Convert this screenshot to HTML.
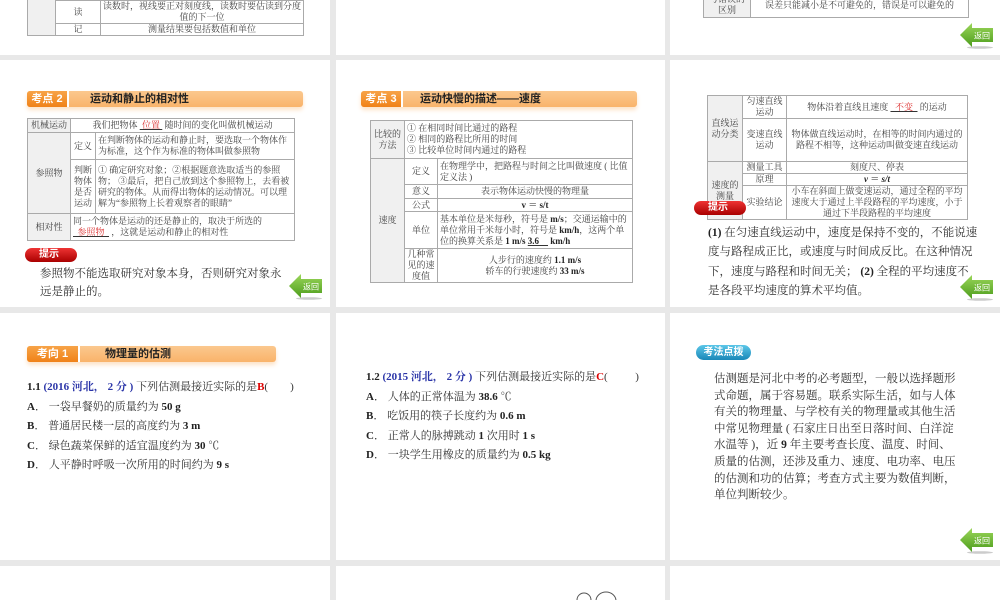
<!DOCTYPE html>
<html><head><meta charset="utf-8"><style>
*{margin:0;padding:0;box-sizing:border-box}
body{width:1000px;height:600px;background:#e8e8e8;position:relative;overflow:hidden;font-family:"Liberation Serif","Noto Serif CJK SC",serif;color:#333}
.s{position:absolute;background:#fff;overflow:hidden}
.a{position:absolute}
table{border-collapse:collapse;position:absolute;font-size:9px;line-height:11px;color:#444}
td{border:1px solid #aaa;text-align:center;vertical-align:middle;padding:0 2px}
td.g{background:#f0f0f0}
td.l{text-align:left}
.hb{position:absolute;height:16px;background:linear-gradient(#fbc88e,#f9b36a);border-radius:3px;box-shadow:0 3px 4px #fde3c8}
.hb .t{position:absolute;left:0;top:0;height:16px;background:linear-gradient(#f7a347,#f08218);color:#fff;font:bold 11px/16px "Liberation Sans","Noto Sans CJK SC",sans-serif;text-align:center;border-radius:3px 0 0 3px;border-right:2px solid #fff}
.hb .h{position:absolute;top:0;font:bold 11px/16px "Liberation Sans","Noto Sans CJK SC",sans-serif;color:#222}
.tip{position:absolute;width:52px;height:14px;border-radius:7px;background:linear-gradient(#e33,#a00);color:#fff;font:bold 10px/14px "Liberation Sans","Noto Sans CJK SC",sans-serif;padding-left:14px}
.back{position:absolute;width:34px;height:26px}
.u{color:#d33;text-decoration:underline;text-decoration-color:#333}
.q{position:absolute;font-size:11px;line-height:19.5px;color:#333}
b{color:#222}
.bl{color:#2b35a8;font-weight:bold}
</style></head><body>
<svg width="0" height="0" style="position:absolute"><defs>
<linearGradient id="gg" x1="0" y1="0" x2="0" y2="1"><stop offset="0" stop-color="#9bd65a"/><stop offset="1" stop-color="#4c9c1c"/></linearGradient>
<symbol id="bk" viewBox="0 0 34 26"><ellipse cx="20" cy="24.5" rx="13" ry="1.3" fill="#ccc"/><path d="M0 12 L12 0 L12 5 L33 5 L33 19 L12 19 L12 24 Z" fill="url(#gg)"/><text x="22" y="15.5" font-size="8" fill="#fff" text-anchor="middle" font-family="Noto Sans CJK SC,sans-serif">返回</text></symbol>
</defs></svg>

<!-- Row1 col1 -->
<div class="s" style="left:0;top:0;width:330px;height:55px">
<table style="left:27px;top:-12px;width:277px">
<tr style="height:12px"><td class="g" rowspan="3" style="width:28px;vertical-align:top">过程</td><td style="width:45px"></td><td></td></tr>
<tr style="height:23px"><td>读</td><td>读数时，视线要正对刻度线，读数时要估读到分度值的下一位</td></tr>
<tr style="height:12px"><td>记</td><td>测量结果要包括数值和单位</td></tr>
</table></div>
<div class="s" style="left:336px;top:0;width:329px;height:55px"></div>
<div class="s" style="left:670px;top:0;width:330px;height:55px">
<table style="left:33px;top:-8px;width:266px"><tr style="height:25px"><td class="g" style="width:47px">与错误的区别</td><td>误差只能减小是不可避免的，错误是可以避免的</td></tr></table>
<svg class="back" style="left:290px;top:23px"><use href="#bk"/></svg></div>

<!-- Row2 col1 -->
<div class="s" style="left:0;top:60px;width:330px;height:247px">
<div class="hb" style="left:27px;top:31px;width:276px"><div class="t" style="width:42px">考点 2</div><div class="h" style="left:63px">运动和静止的相对性</div></div>
<table style="left:27px;top:58px;width:268px">
<tr style="height:14px"><td class="g" style="width:43px">机械运动</td><td colspan="2">我们把物体 <span class="u">&nbsp;位置&nbsp;</span> 随时间的变化叫做机械运动</td></tr>
<tr style="height:27px"><td class="g" rowspan="2">参照物</td><td style="width:25px">定义</td><td class="l">在判断物体的运动和静止时，要选取一个物体作为标准，这个作为标准的物体叫做参照物</td></tr>
<tr style="height:54px"><td>判断物体是否运动</td><td class="l">① 确定研究对象；②根据题意选取适当的参照物； ③最后，把自己放到这个参照物上，去看被研究的物体。从而得出物体的运动情况。可以理解为“参照物上长着观察者的眼睛”</td></tr>
<tr style="height:27px"><td class="g">相对性</td><td colspan="2" class="l">同一个物体是运动的还是静止的，取决于所选的<br><span class="u">&nbsp;&nbsp;参照物&nbsp;&nbsp;</span> ，这就是运动和静止的相对性</td></tr>
</table>
<div class="tip" style="left:25px;top:188px">提示</div>
<div class="a" style="left:40px;top:206px;font-size:11.5px;line-height:17.5px;color:#333">参照物不能选取研究对象本身，否则研究对象永<br>远是静止的。</div>
<svg class="back" style="left:289px;top:214px"><use href="#bk"/></svg>
</div>

<!-- Row2 col2 -->
<div class="s" style="left:336px;top:60px;width:329px;height:247px">
<div class="hb" style="left:25px;top:31px;width:276px"><div class="t" style="width:42px">考点 3</div><div class="h" style="left:59px">运动快慢的描述——速度</div></div>
<table style="left:34px;top:60px;width:263px">
<tr style="height:38px"><td class="g" style="width:34px">比较的方法</td><td colspan="2" class="l">① 在相同时间比通过的路程<br>② 相同的路程比所用的时间<br>③ 比较单位时间内通过的路程</td></tr>
<tr style="height:26px"><td class="g" rowspan="5">速度</td><td style="width:33px">定义</td><td class="l">在物理学中，把路程与时间之比叫做速度 ( 比值定义法 )</td></tr>
<tr style="height:14px"><td>意义</td><td>表示物体运动快慢的物理量</td></tr>
<tr style="height:13px"><td>公式</td><td><b>v ＝ s/t</b></td></tr>
<tr style="height:37px"><td>单位</td><td class="l">基本单位是米每秒，符号是 <b>m/s</b>；交通运输中的单位常用千米每小时，符号是 <b>km/h</b>，这两个单位的换算关系是 <b>1 m/s</b> <span class="u"><b>3.6</b>&nbsp;&nbsp;&nbsp;&nbsp;</span> <b>km/h</b></td></tr>
<tr style="height:34px"><td>几种常见的速度值</td><td>人步行的速度约 <b>1.1 m/s</b><br>轿车的行驶速度约 <b>33 m/s</b></td></tr>
</table></div>

<!-- Row2 col3 -->
<div class="s" style="left:670px;top:60px;width:330px;height:247px">
<table style="left:37px;top:35px;width:261px">
<tr style="height:22px"><td class="g" rowspan="2" style="width:35px">直线运动分类</td><td style="width:44px">匀速直线运动</td><td>物体沿着直线且速度 <span class="u">&nbsp;&nbsp;不变&nbsp;&nbsp;</span> 的运动</td></tr>
<tr style="height:43px"><td>变速直线运动</td><td>物体做直线运动时，在相等的时间内通过的路程不相等，这种运动叫做变速直线运动</td></tr>
<tr style="height:12px"><td class="g" rowspan="3">速度的测量</td><td>测量工具</td><td>刻度尺、停表</td></tr>
<tr style="height:10px"><td>原理</td><td><b><i>v</i> ＝ <i>s/t</i></b></td></tr>
<tr style="height:33px"><td>实验结论</td><td>小车在斜面上做变速运动，通过全程的平均速度大于通过上半段路程的平均速度，小于通过下半段路程的平均速度</td></tr>
</table>
<div class="tip" style="left:24px;top:141px">提示</div>
<div class="a" style="left:38px;top:164px;font-size:11.5px;line-height:19.3px;width:270px;color:#333"><b>(1)</b> 在匀速直线运动中，速度是保持不变的，不能说速度与路程成正比，或速度与时间成反比。在这种情况下，速度与路程和时间无关； <b>(2)</b> 全程的平均速度不是各段平均速度的算术平均值。</div>
<svg class="back" style="left:290px;top:215px"><use href="#bk"/></svg>
</div>

<!-- Row3 col1 -->
<div class="s" style="left:0;top:313px;width:330px;height:247px">
<div class="hb" style="left:27px;top:33px;width:249px"><div class="t" style="width:53px">考向 1</div><div class="h" style="left:78px">物理量的估测</div></div>
<div class="q" style="left:27px;top:65px"><b>1.1</b> <span class="bl">(2016 河北， 2 分 )</span> 下列估测最接近实际的是<span style="color:#d00;font-weight:bold">B</span>(&nbsp;&nbsp;&nbsp;&nbsp;&nbsp;&nbsp;&nbsp;&nbsp;)<br><b>A</b>． 一袋早餐奶的质量约为 <b>50 g</b><br><b>B</b>． 普通居民楼一层的高度约为 <b>3 m</b><br><b>C</b>． 绿色蔬菜保鲜的适宜温度约为 <b>30</b> ℃<br><b>D</b>． 人平静时呼吸一次所用的时间约为 <b>9 s</b></div>
</div>

<!-- Row3 col2 -->
<div class="s" style="left:336px;top:313px;width:329px;height:247px">
<div class="q" style="left:30px;top:55px"><b>1.2</b> <span class="bl">(2015 河北， 2 分 )</span> 下列估测最接近实际的是<span style="color:#d00;font-weight:bold">C</span>(&nbsp;&nbsp;&nbsp;&nbsp;&nbsp;&nbsp;&nbsp;&nbsp;&nbsp;&nbsp;)<br><b>A</b>． 人体的正常体温为 <b>38.6</b> ℃<br><b>B</b>． 吃饭用的筷子长度约为 <b>0.6 m</b><br><b>C</b>． 正常人的脉搏跳动 <b>1</b> 次用时 <b>1 s</b><br><b>D</b>． 一块学生用橡皮的质量约为 <b>0.5 kg</b></div>
</div>

<!-- Row3 col3 -->
<div class="s" style="left:670px;top:313px;width:330px;height:247px">
<div class="a" style="left:26px;top:32px;width:55px;height:15px;border-radius:8px;background:linear-gradient(#5bc6e8,#1a88b8);color:#fff;font:bold 10px/15px 'Liberation Sans','Noto Sans CJK SC',sans-serif;text-align:center">考法点拨</div>
<div class="a" style="left:44px;top:58px;width:245px;font-size:11.5px;line-height:16.6px;color:#333">估测题是河北中考的必考题型，一般以选择题形式命题，属于容易题。联系实际生活，如与人体有关的物理量、与学校有关的物理量或其他生活中常见物理量 ( 石家庄日出至日落时间、白洋淀水温等 )，近 <b>9</b> 年主要考查长度、温度、时间、质量的估测，还涉及重力、速度、电功率、电压的估测和功的估算；考查方式主要为数值判断，单位判断较少。</div>
<svg class="back" style="left:290px;top:215px"><use href="#bk"/></svg>
</div>

<!-- Row4 -->
<div class="s" style="left:0;top:566px;width:330px;height:34px"></div>
<div class="s" style="left:336px;top:566px;width:329px;height:34px">
<svg class="a" style="left:240px;top:24px" width="50" height="12"><circle cx="8" cy="10" r="7" fill="none" stroke="#555"/><ellipse cx="30" cy="11" rx="10" ry="9" fill="none" stroke="#555"/></svg></div>
<div class="s" style="left:670px;top:566px;width:330px;height:34px"></div>
</body></html>
